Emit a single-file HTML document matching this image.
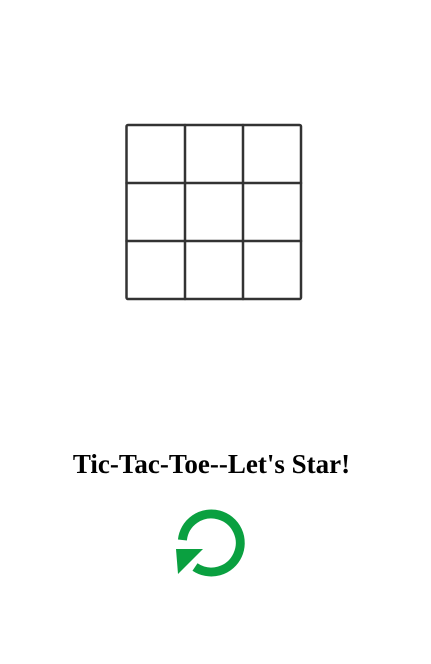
<!DOCTYPE html>
<html><head><style>
body{margin:0;width:431px;height:664px;background:#fff;position:relative;overflow:hidden}
h1{position:absolute;left:0;width:423px;top:449px;margin:0;text-align:center;font:bold 27px "Liberation Serif",serif;color:#000;white-space:nowrap}
</style></head><body>
<svg width="431" height="664" style="position:absolute;left:0;top:0">
<g stroke="#333" stroke-width="2.5" fill="none" stroke-linecap="round">
<rect x="126.5" y="125" width="174.5" height="174" rx="1.5"/>
<line x1="185" y1="125" x2="185" y2="299"/>
<line x1="243" y1="125" x2="243" y2="299"/>
<line x1="126.5" y1="183" x2="301" y2="183"/>
<line x1="126.5" y1="241" x2="301" y2="241"/>
</g>
<path d="M182.4 540 A29 29 0 1 1 195 567" stroke="#0aa040" stroke-width="9" fill="none"/>
<polygon points="176,549 203,549 178,574" fill="#0aa040"/>
</svg>
<h1>Tic-Tac-Toe--Let's Star!</h1>
</body></html>
